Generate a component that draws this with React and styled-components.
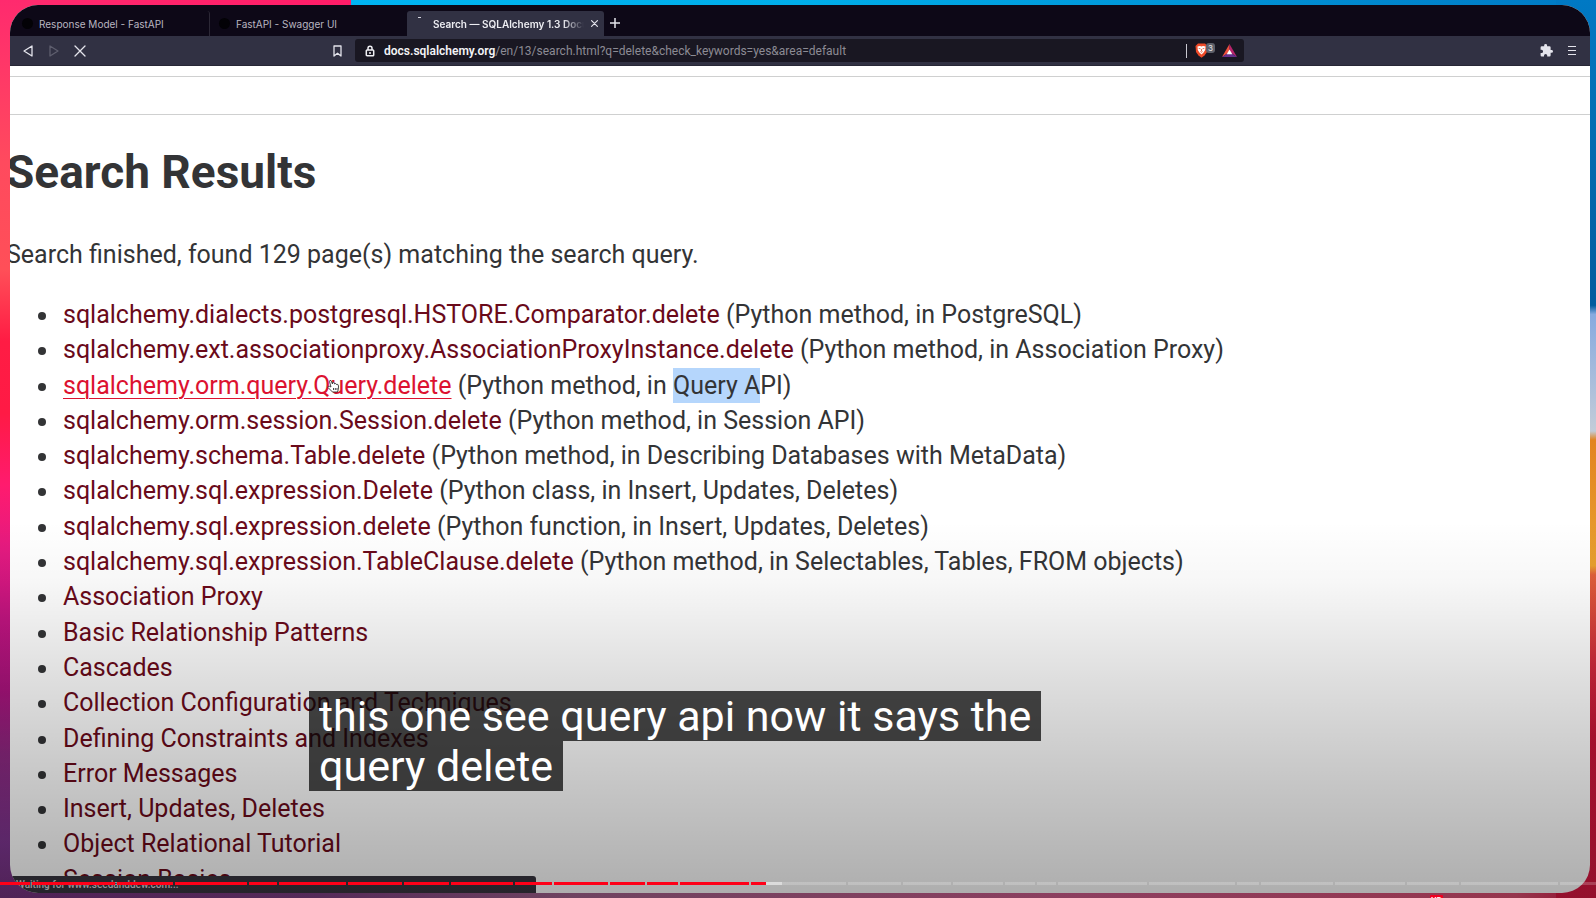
import React from "react";
import styled, { createGlobalStyle } from "styled-components";

const GlobalStyle = createGlobalStyle`
  *, *::before, *::after { box-sizing: border-box; }
  body { margin: 0; background: #000; }
  button, input { font: inherit; color: inherit; }
  button { background: none; border: 0; padding: 0; }
`;

const uiFont = `Inter, "Liberation Sans", sans-serif`;
const docFont = `Roboto, "Liberation Sans", sans-serif`;

const Desktop = styled.div`
  position: relative;
  height: 100vh;
  overflow: hidden;
  padding: 5px 6px 5px 10px;
  background:
    linear-gradient(180deg, #ff2a6e 0%, #ff4a5e 18%, #ff4f58 30%, #ff1c44 38%, #ff1a45 46%, #ff1b6e 54%, #e51a80 61%, #c01480 69%, #a8137c 77%, #8c2880 84%, #7d3690 94%, #75327e 100%)
      left top / 40px 100% no-repeat,
    linear-gradient(180deg, #0079c4 0%, #0071b6 10%, #005c9e 34%, #86aadf 35%, #c3ccd8 48%, #e28420 49%, #e8a030 63%, #e0603a 64%, #d32a3c 74%, #c81436 82%, #da1742 100%)
      right top / 40px 100% no-repeat,
    linear-gradient(90deg, #ff2a6e 0%, #ff1c68 22%, #00b4f2 22%, #00aeea 50%, #0079c4 100%)
      left top / 100% 40px no-repeat,
    linear-gradient(90deg, #75327e 0%, #7d3f82 20%, #a4638e 36%, #d05c8c 68%, #dc4f72 95%, #da1742 100%)
      left bottom / 100% 40px no-repeat;
`;

const BrowserWindow = styled.div`
  position: relative;
  display: flex;
  flex-direction: column;
  height: 100%;
  overflow: hidden;
  border-radius: 28px;
  background: #fff;
`;

const TabStrip = styled.div`
  flex: none;
  display: flex;
  align-items: flex-end;
  height: 31px;
  padding-left: 3px;
  background: #0d0817;
  font: 10px/16px ${uiFont};
`;

const Tab = styled.div`
  position: relative;
  display: flex;
  align-items: center;
  gap: 6px;
  flex: 0 1 197px;
  min-width: 0;
  height: 25px;
  padding: 0 5px 0 9px;
  border-radius: 3px 3px 0 0;
  background: ${(p) => (p.$active ? "#313143" : "transparent")};
  color: ${(p) => (p.$active ? "#ededf2" : "#b9b6c0")};
  font-weight: ${(p) => (p.$active ? 600 : 400)};
  border-right: 1px solid ${(p) => (p.$divided ? "#2c2836" : "transparent")};
`;

const Favicon = styled.span`
  flex: none;
  width: 11px;
  height: 11px;
  border-radius: 50%;
  background: #030206;
`;

const Spinner = styled.span`
  flex: none;
  align-self: flex-start;
  width: 3px;
  height: 1px;
  margin: 6px 6px 0 2px;
  background: #d6d6e0;
`;

const TabTitle = styled.button`
  flex: 1;
  min-width: 0;
  overflow: hidden;
  white-space: nowrap;
  text-align: left;
  ${(p) => p.$faded && "mask-image: linear-gradient(90deg, #000 86%, transparent 100%);"}
`;

const IconButton = styled.button`
  flex: none;
  display: flex;
  align-items: center;
  justify-content: center;
  width: ${(p) => p.$size || 14}px;
  height: 26px;
  color: ${(p) => (p.$muted ? "#5e5e6e" : "#e4e4ec")};
`;

const Toolbar = styled.div`
  flex: none;
  display: grid;
  grid-template-columns: 345px 1fr 346px;
  align-items: center;
  height: 30px;
  background: #313143;
  border-bottom: 1px solid #272736;
`;

const Navigation = styled.div`
  display: flex;
  align-items: center;
  gap: 12px;
  padding: 0 11px;
`;

const Push = styled.span`
  flex: 1;
`;

const Address = styled.div`
  display: flex;
  align-items: center;
  height: 23px;
  min-width: 0;
  padding: 0 7px 0 10px;
  border-radius: 3px;
  background: #191722;
  color: #8c8b94;
  font: 12px/22px ${docFont};
`;

const Url = styled.a`
  flex: 1;
  min-width: 0;
  overflow: hidden;
  white-space: nowrap;
  padding-left: 9px;
  color: inherit;
  text-decoration: none;
`;

const Host = styled.b`
  color: #f3f3f6;
  font-weight: 600;
`;

const Divider = styled.span`
  width: 1px;
  height: 14px;
  margin-right: 8px;
  background: #c9c8d0;
`;

const Shield = styled(IconButton)`
  position: relative;
  justify-content: flex-start;
  margin-right: 7px;
`;

const Badge = styled.span`
  position: absolute;
  left: 11px;
  top: 5px;
  width: 9px;
  height: 10px;
  border-radius: 3px;
  background: #5e606a;
  color: #e6e6ea;
  font: 8px/10px ${uiFont};
  text-align: center;
`;

const Actions = styled(Navigation)`
  justify-content: flex-end;
`;

const Page = styled.main`
  position: relative;
  flex: 1;
  min-height: 0;
  overflow: hidden;
  padding-top: 10px;
  color: #333436;
  font: 25px/35px ${docFont};
`;

const HeaderBand = styled.div`
  height: 39px;
  border: solid #cfd0d0;
  border-width: 1px 0;
`;

const Article = styled.div`
  margin: 30px 0 0 -4px;
`;

const Title = styled.h1`
  margin: 0;
  font-size: 46px;
  line-height: 54px;
  font-weight: 700;
`;

const Summary = styled.p`
  margin: 38px 0 25px;
`;

const Results = styled.ul`
  display: grid;
  grid-auto-rows: 1fr;
  min-height: 600px;
  margin: 0;
  padding: 0 0 0 57px;
  list-style: none;
`;

const Result = styled.li`
  white-space: nowrap;

  &::before {
    content: "";
    display: inline-block;
    width: 8px;
    height: 8px;
    margin: 0 17px 0 -25px;
    border-radius: 50%;
    background: currentColor;
    vertical-align: 3px;
  }
`;

const ResultLink = styled.a`
  color: ${(p) => (p.$hovered ? "#dc1230" : "#6a0a1a")};
  text-decoration: ${(p) => (p.$hovered ? "underline" : "none")};
  text-decoration-thickness: 1px;
  text-underline-offset: 4px;
  text-decoration-skip-ink: auto;
`;

const Selected = styled.mark`
  padding: 3px 0;
  background: #b5d6fc;
  color: inherit;
`;

const Pointer = styled.svg`
  position: absolute;
  left: 317px;
  top: 313px;
`;

const StatusBubble = styled.div`
  position: absolute;
  left: 0;
  bottom: 0;
  width: 526px;
  max-width: 100%;
  height: 17px;
  padding-left: 6px;
  border-radius: 0 3px 0 0;
  background: #38353f;
  color: #d8d8de;
  font: 10px/18px ${docFont};
  font-weight: 500;
`;

const Shade = styled.div`
  position: absolute;
  inset: 58% 0 0;
  background: linear-gradient(180deg, transparent 0%, rgba(0, 0, 0, 0.03) 16%, rgba(0, 0, 0, 0.13) 42%, rgba(0, 0, 0, 0.22) 68%, rgba(0, 0, 0, 0.32) 100%);
  pointer-events: none;
`;

const Captions = styled.div`
  position: absolute;
  left: 309px;
  bottom: 107px;
  color: #fff;
  font: 43px/50px ${docFont};
`;

const CaptionLine = styled.div`
  width: fit-content;
  padding: 0 10px;
  background: rgba(8, 8, 8, 0.74);
  white-space: nowrap;
`;

const Timeline = styled.div`
  position: absolute;
  inset: auto 0 13px;
  display: flex;
  gap: 2px;
  height: 3px;
`;

const Chapter = styled.span`
  flex: ${(p) => p.$length} 1 0;
  background: linear-gradient(
    90deg,
    #ff0018 ${(p) => p.$played}%,
    rgba(255, 255, 255, 0.55) ${(p) => p.$played}% ${(p) => p.$loaded}%,
    rgba(255, 255, 255, 0.2) ${(p) => p.$loaded}%
  );
`;

const Quality = styled.span`
  position: absolute;
  right: 153px;
  bottom: -6px;
  width: 13px;
  height: 9px;
  border-radius: 1px;
  background: #f00020;
  color: #fff;
  font: 700 8px/10px ${docFont};
  text-align: center;
`;

const results = [
  ["sqlalchemy.dialects.postgresql.HSTORE.Comparator.delete", "(Python method, in PostgreSQL)"],
  ["sqlalchemy.ext.associationproxy.AssociationProxyInstance.delete", "(Python method, in Association Proxy)"],
  ["sqlalchemy.orm.query.Query.delete", <>(Python method, in <Selected>Query A</Selected>PI)</>, true],
  ["sqlalchemy.orm.session.Session.delete", "(Python method, in Session API)"],
  ["sqlalchemy.schema.Table.delete", "(Python method, in Describing Databases with MetaData)"],
  ["sqlalchemy.sql.expression.Delete", "(Python class, in Insert, Updates, Deletes)"],
  ["sqlalchemy.sql.expression.delete", "(Python function, in Insert, Updates, Deletes)"],
  ["sqlalchemy.sql.expression.TableClause.delete", "(Python method, in Selectables, Tables, FROM objects)"],
  ["Association Proxy"],
  ["Basic Relationship Patterns"],
  ["Cascades"],
  ["Collection Configuration and Techniques"],
  ["Defining Constraints and Indexes"],
  ["Error Messages"],
  ["Insert, Updates, Deletes"],
  ["Object Relational Tutorial"],
  ["Session Basics"],
];

const chapters = [30, 83, 56, 72, 28, 67, 54, 45, 62, 37, 54, 35, 31, 69, 95, 53, 48, 50, 30, 19, 89, 86, 22, 72, 70, 52, 97, 36];
const currentChapter = 14;

const chapterFill = (i) => {
  if (i < currentChapter) return { $played: 100, $loaded: 100 };
  if (i === currentChapter) return { $played: 16, $loaded: 33 };
  return { $played: 0, $loaded: 0 };
};

const Triangle = ({ flip }) => (
  <svg width="10" height="12" viewBox="0 0 10 12" fill="none" stroke="currentColor" strokeWidth="1.3" strokeLinejoin="round">
    <path d={flip ? "M1 1 9 6 1 11Z" : "M9 1 1 6 9 11Z"} />
  </svg>
);

const Cross = ({ size }) => (
  <svg width={size} height={size} viewBox="0 0 12 12" stroke="currentColor" strokeWidth={size > 8 ? 1.3 : 2} strokeLinecap="round">
    <path d="M1 1 11 11M11 1 1 11" />
  </svg>
);

export default function App() {
  return (
    <Desktop>
      <GlobalStyle />
      <BrowserWindow>
        <TabStrip>
          <Tab $divided>
            <Favicon />
            <TabTitle>Response Model - FastAPI</TabTitle>
          </Tab>
          <Tab>
            <Favicon />
            <TabTitle>FastAPI - Swagger UI</TabTitle>
          </Tab>
          <Tab $active>
            <Spinner />
            <TabTitle $faded>Search — SQLAlchemy 1.3 Documentation</TabTitle>
            <IconButton $size={8} aria-label="Close tab"><Cross size={7} /></IconButton>
          </Tab>
          <IconButton $size={22} aria-label="New tab">
            <svg width="10" height="10" viewBox="0 0 10 10" stroke="currentColor" strokeWidth="1.5">
              <path d="M5 0V10M0 5H10" />
            </svg>
          </IconButton>
        </TabStrip>

        <Toolbar>
          <Navigation>
            <IconButton aria-label="Back"><Triangle /></IconButton>
            <IconButton $muted aria-label="Forward"><Triangle flip /></IconButton>
            <IconButton aria-label="Stop loading"><Cross size={12} /></IconButton>
            <Push />
            <IconButton aria-label="Bookmark">
              <svg width="9" height="12" viewBox="0 0 9 12" fill="none" stroke="currentColor" strokeWidth="1.3" strokeLinejoin="round">
                <path d="M1 1H8V11L4.500 8.200 1 11Z" />
              </svg>
            </IconButton>
          </Navigation>
          <Address>
            <svg width="10" height="12" viewBox="0 0 10 12" fill="none" stroke="#f0f0f4" strokeWidth="1.500">
              <rect x="1.300" y="5" width="7.400" height="5.700" rx="0.800" />
              <path d="M3 5V3.200A2 2 0 0 1 7 3.200V5M5 7V9" />
            </svg>
            <Url href="#"><Host>docs.sqlalchemy.org</Host>/en/13/search.html?q=delete&amp;check_keywords=yes&amp;area=default</Url>
            <Divider />
            <Shield $size={20} aria-label="Shields, 3 blocked">
              <svg width="13" height="15" viewBox="0 0 13 15">
                <path d="M3 0.500H10L12.500 3 12 9 9.500 12.500 6.500 14.800 3.500 12.500 1 9 0.500 3Z" fill="#ee4a28" />
                <path d="M2.500 3.500 5 3 6.500 3.600 8 3 10.500 3.500 10.200 7 8.600 9.500 6.500 11.500 4.400 9.500 2.800 7Z" fill="#fff" />
                <path d="M3.600 5.300 5.500 5.800M9.400 5.300 7.500 5.800M6.500 6V8.300M5.400 8.500 6.500 9.300 7.600 8.500" stroke="#e8532f" strokeWidth="0.800" fill="none" />
              </svg>
              <Badge>3</Badge>
            </Shield>
            <IconButton $size={15} aria-label="Rewards">
              <svg width="15" height="13" viewBox="0 0 15 13">
                <path d="M7.500 0 0 13 7.500 8Z" fill="#f0503c" />
                <path d="M7.500 0 15 13 7.500 8Z" fill="#b8246c" />
                <path d="M0 13 7.500 8 15 13Z" fill="#66308c" />
                <path d="M7.500 5.500 10.300 10.200H4.700Z" fill="#fff" />
              </svg>
            </IconButton>
          </Address>
          <Actions>
            <IconButton aria-label="Extensions">
              <svg width="13" height="13" viewBox="1 1 22 22" fill="currentColor">
                <path d="M20.500 11H19V7a2 2 0 0 0-2-2h-4V3.500a2.500 2.500 0 0 0-5 0V5H4a2 2 0 0 0-2 2v3.800h1.500a2.700 2.700 0 0 1 0 5.400H2V20a2 2 0 0 0 2 2h3.800v-1.500a2.700 2.700 0 0 1 5.400 0V22H17a2 2 0 0 0 2-2v-4h1.500a2.500 2.500 0 0 0 0-5Z" />
              </svg>
            </IconButton>
            <IconButton aria-label="Menu">
              <svg width="8" height="11" viewBox="0 0 8 11" stroke="currentColor">
                <path d="M0 1.500H8M0 5.500H8M0 9.500H8" />
              </svg>
            </IconButton>
          </Actions>
        </Toolbar>

        <Page>
          <HeaderBand />
          <Article>
            <Title>Search Results</Title>
            <Summary>Search finished, found 129 page(s) matching the search query.</Summary>
            <Results>
              {results.map(([name, detail, hovered]) => (
                <Result key={name}>
                  <ResultLink href="#" $hovered={hovered}>{name}</ResultLink>
                  {detail && <> {detail}</>}
                </Result>
              ))}
            </Results>
          </Article>
          <Pointer width="13" height="14" viewBox="0 0 13 14" fill="#fff" stroke="#333" strokeWidth="0.900" strokeLinejoin="round">
            <path d="M4 8 2.500 2.500Q2.500 1 4 1.500L5.500 5 5.300 3.500Q6.500 2.500 7.200 4L7.600 5Q8.800 3.500 9.400 5.500 11.200 4.500 11.500 7L11.300 10.500 10.500 13H5.500L1 8.500Q1 6.800 2.600 7.300Z" />
            <path d="M6.500 9V11M8.300 9V11M10 9V11" />
          </Pointer>
        </Page>
        <StatusBubble>Waiting for www.seedanddew.com...</StatusBubble>
      </BrowserWindow>

      <Shade />
      <Captions>
        <CaptionLine>this one see query api now it says the</CaptionLine>
        <CaptionLine>query delete</CaptionLine>
      </Captions>
      <Timeline>
        {chapters.map((length, i) => (
          <Chapter key={i} $length={length} {...chapterFill(i)} />
        ))}
      </Timeline>
      <Quality>HD</Quality>
    </Desktop>
  );
}
